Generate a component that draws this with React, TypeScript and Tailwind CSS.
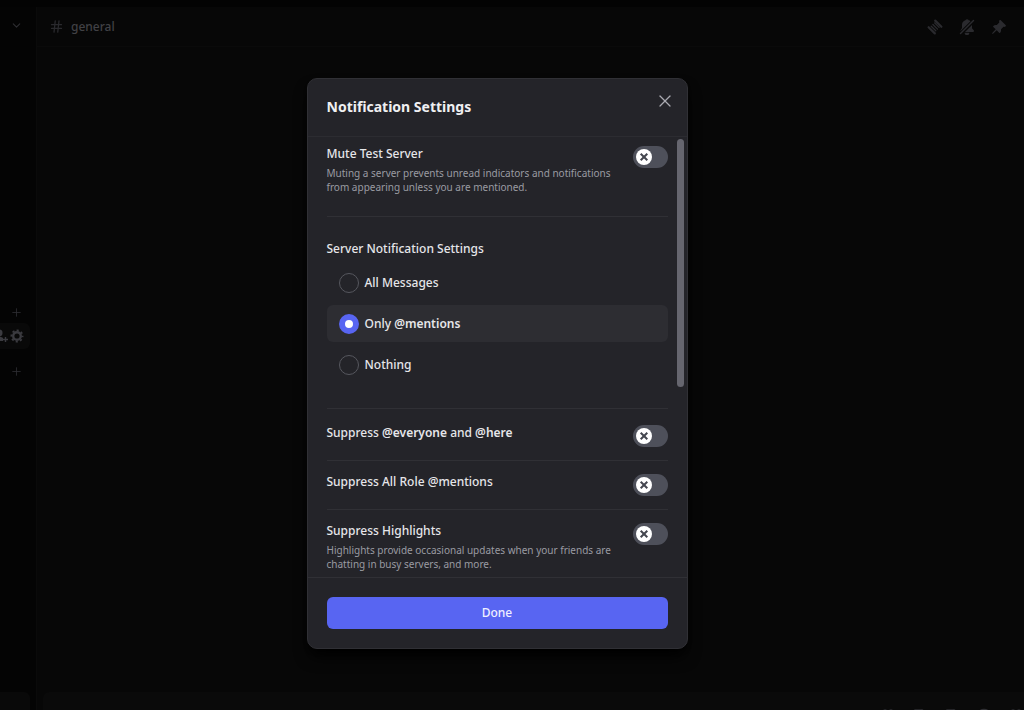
import { useState } from 'react'
import type { ReactNode } from 'react'
import { ChevronDown, Gift, Hash, Plus, Smile, Sticker, X } from 'lucide-react'

type ToggleProps = {
    id: string
    title: ReactNode
    description?: string
}

function ToggleRow({ id, title, description }: ToggleProps) {
    const [on, setOn] = useState(false)

    return (
        <div className="flex items-start justify-between">
            <div className="w-[292px]">
                <label htmlFor={id} className="block text-xs leading-4 font-medium text-[#e6e6e9]">
                    {title}
                </label>
                {description && (
                    <p className="mt-1 text-[10px] leading-[14px] text-[#9a9ba2]">{description}</p>
                )}
            </div>
            <div className="relative h-[22px] w-[35px] shrink-0">
                <input
                    id={id}
                    type="checkbox"
                    role="switch"
                    checked={on}
                    onChange={(e) => setOn(e.target.checked)}
                    className="peer block h-full w-full cursor-pointer appearance-none rounded-full bg-[#4e505a] checked:bg-[#5865f2]"
                />
                <span className="pointer-events-none absolute top-[3px] left-[3px] flex size-4 items-center justify-center rounded-full bg-white text-[#44464f] peer-checked:left-4">
                    <svg viewBox="0 0 16 16" className="size-4" fill="none" stroke="currentColor" strokeWidth="2">
                        <path d="M4.7 4.7l6.6 6.6M11.3 4.7l-6.6 6.6" />
                    </svg>
                </span>
            </div>
        </div>
    )
}

const options = [
    { value: 'all', label: <>All Messages</> },
    { value: 'mentions', label: <>Only <strong className="font-semibold">@mentions</strong></> },
    { value: 'nothing', label: <>Nothing</> },
]

function NotificationOptions() {
    const [selected, setSelected] = useState('mentions')

    return (
        <fieldset>
            <legend className="text-xs leading-4 font-medium text-[#e6e6e9]">Server Notification Settings</legend>
            <div className="mt-[7px] flex flex-col gap-1">
                {options.map((option) => (
                    <label
                        key={option.value}
                        className="flex h-[37px] cursor-pointer items-center gap-[6px] rounded-md px-3 text-xs leading-4 font-medium text-[#e6e6e9] has-checked:bg-[#2d2d32]"
                    >
                        <input
                            type="radio"
                            name="notifications"
                            value={option.value}
                            checked={selected === option.value}
                            onChange={() => setSelected(option.value)}
                            className="size-5 appearance-none rounded-full border border-[#56575e] checked:border-[6px] checked:border-[#5865f2] checked:bg-white"
                        />
                        <span>{option.label}</span>
                    </label>
                ))}
            </div>
        </fieldset>
    )
}

function NotificationModal() {
    return (
        <div
            role="dialog"
            aria-modal="true"
            aria-labelledby="modal-title"
            className="w-[381px] overflow-hidden rounded-[10px] border border-[#303035] bg-[#242429] shadow-lg shadow-black"
        >
            <header className="flex items-start justify-between border-b border-[#2c2c31] px-[19px] pt-3 pb-[17px]">
                <h1 id="modal-title" className="pt-1 text-sm leading-6 font-bold text-[#f0f0f2]">
                    Notification Settings
                </h1>
                <button type="button" aria-label="Close" className="-mr-[7px] text-[#aaaab1]">
                    <X className="size-5" strokeWidth={1.5} absoluteStrokeWidth />
                </button>
            </header>

            <div className="flex h-[440px]">
                <div className="flex-1 overflow-y-auto pl-[19px] [scrollbar-width:none]">
                    <div className="border-b border-[#303035] pt-[9px] pb-[22px]">
                        <ToggleRow
                            id="mute"
                            title="Mute Test Server"
                            description="Muting a server prevents unread indicators and notifications from appearing unless you are mentioned."
                        />
                    </div>
                    <div className="border-b border-[#303035] pt-6 pb-[25px]">
                        <NotificationOptions />
                    </div>
                    <div className="border-b border-[#303035] pt-4 pb-[13px]">
                        <ToggleRow
                            id="everyone"
                            title={<>Suppress <strong className="font-semibold">@everyone</strong> and <strong className="font-semibold">@here</strong></>}
                        />
                    </div>
                    <div className="border-b border-[#303035] py-[13px]">
                        <ToggleRow id="roles" title="Suppress All Role @mentions" />
                    </div>
                    <div className="pt-[13px]">
                        <ToggleRow
                            id="highlights"
                            title="Suppress Highlights"
                            description="Highlights provide occasional updates when your friends are chatting in busy servers, and more."
                        />
                    </div>
                </div>
                <div className="w-[19px] shrink-0 pt-[2px] pl-[9px]">
                    <div className="h-[248px] w-[7px] rounded-full bg-[#66666f]" />
                </div>
            </div>

            <footer className="border-t border-[#303035] p-[19px]">
                <button type="button" className="block h-8 w-full rounded-md bg-[#5865f2] text-xs leading-4 font-medium text-[#f0f0ff]">
                    Done
                </button>
            </footer>
        </div>
    )
}

function ThreadsIcon() {
    return (
        <svg viewBox="0 0 16 16" className="size-4" fill="none" stroke="currentColor" strokeLinecap="round">
            <path d="M1.600 8.200l6.200 6.200M8.200 1.600l6.200 6.200" strokeWidth="2.200" />
            <path d="M4.200 7.200l4.600 4.600M5.900 5.500l4.600 4.600M7.600 3.900l4.500 4.500" strokeWidth="1.300" />
        </svg>
    )
}

function BellOffIcon() {
    return (
        <svg viewBox="0 0 16 16" className="size-4">
            <path
                fill="currentColor"
                d="M9.7 1.3a1.8 1.8 0 0 0-3.3 0A5 5 0 0 0 3 6v3l-1.500 2.500a1 1 0 0 0 .1.600L11.500 2.200a5 5 0 0 0-1.800-.9zM13 6 6 13h8c.9 0 1.300-.8.900-1.400L13 9.200zM5.600 13.800h4.800a2.400 2.400 0 0 1-4.800 0z"
            />
            <path d="M1.500 14.500l13-13" stroke="currentColor" strokeWidth="1.400" strokeLinecap="round" />
        </svg>
    )
}

function PinIcon() {
    return (
        <svg viewBox="0 0 16 16" className="size-4" fill="currentColor">
            <path d="M8.300 1.500c.5-.6 1.200-.6 1.700-.1l4.600 4.600c.5.500.4 1.200-.2 1.600-.5.400-1.200.3-1.900.1L10 10.200c.2 1.300 0 2.600-.9 3.500-.3.300-.7.300-1 0L5.700 11.300 1.800 15 1 14.200l3.700-3.900-2.400-2.400c-.3-.3-.3-.7 0-1 .9-.9 2.200-1.100 3.500-.9l2.500-2.500c-.2-.7-.3-1.400 0-2z" />
        </svg>
    )
}

function PeopleIcon() {
    return (
        <svg viewBox="0 0 14 14" className="size-[14px]" fill="currentColor">
            <circle cx="5" cy="4" r="3.500" />
            <path d="M0 12c0-3 2-4 5-4 2 0 3 .2 4 1v3z" />
            <path d="M11.500 8v5M9 10.500h5" stroke="currentColor" strokeWidth="1.400" />
        </svg>
    )
}

function GearIcon() {
    return (
        <svg viewBox="0 0 14 14" className="size-[14px]" fill="none" stroke="currentColor">
            <circle cx="7" cy="7" r="3.800" strokeWidth="2.400" />
            <circle cx="7" cy="7" r="5.600" strokeWidth="1.800" strokeDasharray="2.200 2.198" strokeDashoffset="1.100" />
        </svg>
    )
}

function Sidebar() {
    return (
        <nav className="flex w-9 shrink-0 flex-col justify-between overflow-hidden bg-[#040404] text-[#2e2e32]">
            <div>
                <button type="button" aria-label="Server menu" className="mt-3 ml-[10px] block">
                    <ChevronDown className="size-[13px]" />
                </button>
                <button type="button" aria-label="Create channel" className="mt-[274px] ml-[10px] block">
                    <Plus className="size-[13px]" strokeWidth={1.5} />
                </button>
                <div className="mt-1 flex h-[26px] w-[30px] items-center justify-end gap-[2px] rounded-r-md bg-[#090909] pr-[6px] text-[#3b3b40]">
                    <button type="button" aria-label="Invite">
                        <PeopleIcon />
                    </button>
                    <button type="button" aria-label="Edit channel">
                        <GearIcon />
                    </button>
                </div>
                <button type="button" aria-label="Create voice channel" className="mt-4 ml-[10px] block">
                    <Plus className="size-[13px]" strokeWidth={1.5} />
                </button>
            </div>
            <div className="h-[18px] w-[30px] rounded-tr-md bg-[#090909]" />
        </nav>
    )
}

export default function App() {
    return (
        <div className="relative flex h-screen min-h-[600px] flex-col overflow-hidden bg-[#030303] pt-[7px] font-['Noto_Sans',sans-serif]">
            <div className="flex flex-1">
                <Sidebar />
                <main className="flex flex-1 flex-col border-l border-[#0a0a0a] bg-[#070707]">
                    <div className="flex h-10 items-center justify-between border-b border-[#0a0a0a] pr-[17px] pl-3 text-[#2a2a2e]">
                        <div className="flex items-center gap-[7px]">
                            <Hash className="size-[15px]" />
                            <h2 className="text-xs leading-4 font-medium text-[#414145]">general</h2>
                        </div>
                        <div className="flex items-center gap-4">
                            <button type="button" aria-label="Threads"><ThreadsIcon /></button>
                            <button type="button" aria-label="Mute channel"><BellOffIcon /></button>
                            <button type="button" aria-label="Pinned messages"><PinIcon /></button>
                        </div>
                    </div>
                    <div className="flex-1" />
                    <div className="ml-[6px] flex h-[18px] items-start justify-end gap-4 overflow-hidden rounded-tl-md bg-[#0a0a0a] pt-4 text-[#2e2e32]">
                        <Gift className="size-4 shrink-0" />
                        <Sticker className="size-4 shrink-0" />
                        <Sticker className="size-4 shrink-0" />
                        <Smile className="size-4 shrink-0" />
                        <Gift className="size-4 shrink-0" />
                    </div>
                </main>
            </div>

            <div className="absolute inset-0 flex items-start justify-center pt-[78px] pr-[30px]">
                <NotificationModal />
            </div>
        </div>
    )
}
